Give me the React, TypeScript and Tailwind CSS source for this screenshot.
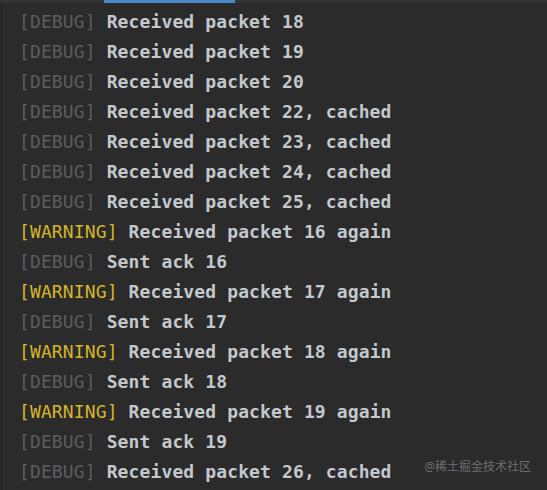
import React from 'react';

type Line = { level: 'DEBUG' | 'WARNING'; text: string };

const lines: Line[] = [
    { level: 'DEBUG', text: 'Received packet 18' },
    { level: 'DEBUG', text: 'Received packet 19' },
    { level: 'DEBUG', text: 'Received packet 20' },
    { level: 'DEBUG', text: 'Received packet 22, cached' },
    { level: 'DEBUG', text: 'Received packet 23, cached' },
    { level: 'DEBUG', text: 'Received packet 24, cached' },
    { level: 'DEBUG', text: 'Received packet 25, cached' },
    { level: 'WARNING', text: 'Received packet 16 again' },
    { level: 'DEBUG', text: 'Sent ack 16' },
    { level: 'WARNING', text: 'Received packet 17 again' },
    { level: 'DEBUG', text: 'Sent ack 17' },
    { level: 'WARNING', text: 'Received packet 18 again' },
    { level: 'DEBUG', text: 'Sent ack 18' },
    { level: 'WARNING', text: 'Received packet 19 again' },
    { level: 'DEBUG', text: 'Sent ack 19' },
    { level: 'DEBUG', text: 'Received packet 26, cached' },
];

export default function App() {
    return (
        <div className="relative w-[547px] h-[490px] overflow-hidden bg-[#2b2b2b] font-['DejaVu_Sans_Mono',monospace]">
        {/* tab strip */}
        <div className="flex h-[3px] bg-[#313335]">
            <div className="w-[104px]" />
            <div className="w-[131px] bg-[#4a88c7]" />
        </div>

        <div className="flex h-[487px]">
            <div className="w-[3px] bg-[#262626]" />
            <div className="flex flex-col pt-[4px] pl-[16px]">
            {lines.map((line, idx) => (
                <div key={idx} className="h-[30px] leading-[30px] text-[18px] tracking-[0.12px] whitespace-pre">
                {line.level === 'DEBUG' ? (
                    <span className="text-[#5b5d5f]">[DEBUG] </span>
                ) : (
                    <span className="text-[#d4b52a]">[WARNING] </span>
                )}
                <span className="text-[#c3c8cc] font-bold">{line.text}</span>
                </div>
            ))}
            </div>
        </div>

        <span className="absolute right-[16px] bottom-[14px] text-[12px] text-[#6b6d70] font-['Noto_Sans','Noto_Sans_CJK_SC',sans-serif]">
            @稀土掘金技术社区
        </span>
        </div>
    );
}
